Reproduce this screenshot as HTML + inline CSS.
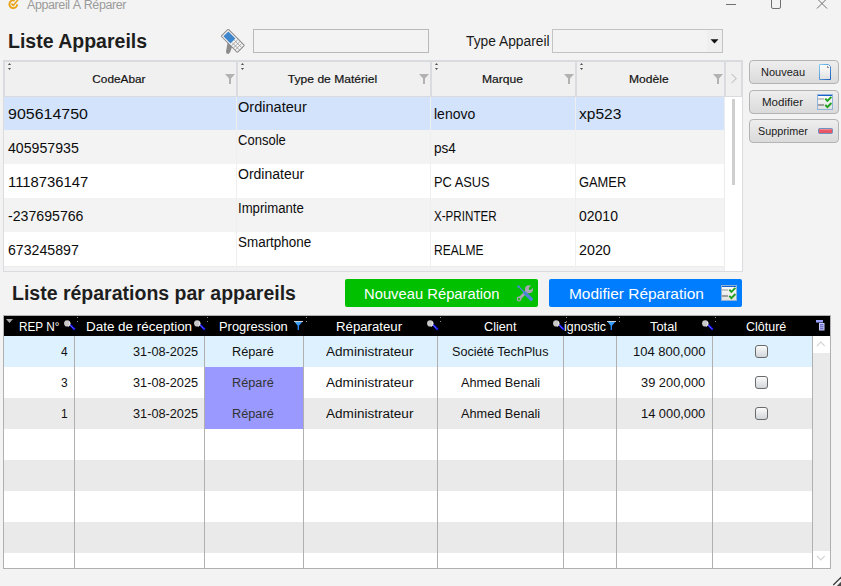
<!DOCTYPE html>
<html><head><meta charset="utf-8">
<style>
*{margin:0;padding:0;box-sizing:border-box}
html,body{width:841px;height:586px;overflow:hidden;background:#f3f3f3;font-family:"Liberation Sans",sans-serif;position:relative}
.a{position:absolute}
.t{position:absolute;white-space:nowrap;line-height:20px;height:20px}
/* upper grid */
#g1{left:3px;top:60px;width:739px;height:211px;border:2px solid #d9dadd;background:#f0f0f0}
.hsep{position:absolute;top:0;width:2px;height:34px;background:#d9dadd}
.row{position:absolute;left:0;height:34px;width:719px}
.csep{position:absolute;top:0;width:1px;height:34px;background:#f0f0f0}
.hd{position:absolute;top:12px;font:bold 11px "Liberation Sans",sans-serif;color:#1a1a1a;text-align:center;line-height:14px}
.srt{position:absolute;top:1px;width:4px;height:9px}
.flt{position:absolute;top:13px}
.d1{position:absolute;font-size:15px;color:#111;line-height:20px;letter-spacing:0.5px}
.d2{position:absolute;font-size:13.5px;color:#111;line-height:18px}
.btn{position:absolute;left:749px;width:90px;height:24px;border:1px solid #b3b3b3;border-radius:4px;background:linear-gradient(#eeeeee,#dadada)}
.btn .t{font-size:11.5px;color:#1a1a1a;line-height:21px;height:21px}
/* lower grid */
#g2{left:3px;top:315px;width:828px;height:254px;border:1px solid #a8a8a8;background:#fff}
.lh{position:absolute;top:0;height:20px;line-height:20px;color:#fff;font-size:12.5px;text-align:center}
.lr{position:absolute;left:0;width:808px;height:31px}
.vs{position:absolute;top:20px;width:1px;height:232px;background:#a8a8a8}
.lc{position:absolute;height:31px;line-height:31px;font-size:12.5px;color:#222;white-space:nowrap}
.cb{position:absolute;width:13px;height:13px;border:1px solid #6a6a6a;border-radius:3px;background:linear-gradient(#fbfbfb,#d2d6da)}
</style></head><body>

<!-- title bar -->
<svg class="a" style="left:8px;top:-2px" width="12" height="12" viewBox="0 0 12 12">
  <path d="M6.8 2.6 A3.9 3.9 0 1 0 9.2 6.2" fill="none" stroke="#e8a317" stroke-width="1.9"/>
  <path d="M3.4 5.6 L5.3 7.4 L10.2 1.6" fill="none" stroke="#e8a317" stroke-width="1.6"/>
</svg>
<div class="t" style="left:27px;top:-5.5px;font-size:12.5px;letter-spacing:-0.4px;color:#9a9a9a">Appareil À Réparer</div>
<div class="a" style="left:726px;top:4px;width:10px;height:1px;background:#707070"></div>
<div class="a" style="left:771px;top:-3px;width:10px;height:12px;border:1px solid #707070;border-radius:2px"></div>
<svg class="a" style="left:816px;top:-2px" width="12" height="12" viewBox="0 0 12 12"><path d="M1 0.5 L11 10.5 M11 0.5 L1 10.5" stroke="#707070" stroke-width="1"/></svg>

<!-- heading -->
<div class="t" style="left:8px;top:31px;font-size:19.5px;font-weight:bold;color:#1e1e1e">Liste Appareils</div>

<!-- scanner icon -->
<svg class="a" style="left:218px;top:27px" width="30" height="30" viewBox="0 0 30 30">
  <path d="M9.5 16 L15 17.5 L12 25.5 L10.5 27 L8.5 26.5 L8 24.5 Z" fill="#8c8c8c"/>
  <g transform="rotate(-45 14.8 13.8)">
    <rect x="9.8" y="2.3" width="10" height="23" rx="0.8" fill="#f4f4f4" stroke="#8a8a8a" stroke-width="1"/>
    <rect x="11.3" y="4" width="7" height="10" fill="#3f86cc"/>
    <path d="M10.3 16.5 H19.3 M10.3 19.3 H19.3 M10.3 22 H19.3 M13 14.5 V25 M16.3 14.5 V25" stroke="#9a9a9a" stroke-width="0.8"/>
  </g>
</svg>
<div class="a" style="left:253px;top:29px;width:176px;height:24px;border:1px solid #b9b9b9;background:#f3f3f3"></div>

<div class="t" style="left:466px;top:32px;font-size:13.8px;color:#1a1a1a">Type Appareil</div>
<div class="a" style="left:552px;top:29px;width:171px;height:24px;border:1px solid #c3c3c3;background:#f3f3f3"></div>
<div class="a" style="left:707px;top:30px;width:15px;height:22px;background:#efefef"></div>
<svg class="a" style="left:710px;top:38.5px" width="9" height="5" viewBox="0 0 9 5"><path d="M0.5 0.3 H8.5 L4.5 4.6 Z" fill="#111"/></svg>

<!-- upper grid -->
<div class="a" style="left:3px;top:60px;width:740px;height:212px;border:1px solid #dadbde;background:#f2f2f2"></div>
<div class="a" style="left:3px;top:60px;width:740px;height:37px;border:2px solid #dadbde;border-bottom-width:1px;background:#f0f0f0"></div>
<div class="a" style="left:236px;top:62px;width:2px;height:34px;background:#dadbde"></div>
<div class="a" style="left:430px;top:62px;width:2px;height:34px;background:#dadbde"></div>
<div class="a" style="left:575px;top:62px;width:2px;height:34px;background:#dadbde"></div>
<div class="a" style="left:724px;top:62px;width:2px;height:34px;background:#dadbde"></div>
<div class="a" style="left:5px;top:73px;width:228px;text-align:center;font:11.5px 'Liberation Sans',sans-serif;-webkit-text-stroke:0.2px #141414;line-height:13px;color:#141414"><span style="display:inline-block;transform:scaleX(1.025)">CodeAbar</span></div>
<div class="a" style="left:238px;top:73px;width:189px;text-align:center;font:11.5px 'Liberation Sans',sans-serif;-webkit-text-stroke:0.2px #141414;line-height:13px;color:#141414"><span style="display:inline-block;transform:scaleX(1.05)">Type de Matériel</span></div>
<div class="a" style="left:432px;top:73px;width:140px;text-align:center;font:11.5px 'Liberation Sans',sans-serif;-webkit-text-stroke:0.2px #141414;line-height:13px;color:#141414"><span style="display:inline-block;transform:scaleX(1.05)">Marque</span></div>
<div class="a" style="left:577px;top:73px;width:144px;text-align:center;font:11.5px 'Liberation Sans',sans-serif;-webkit-text-stroke:0.2px #141414;line-height:13px;color:#141414"><span style="display:inline-block;transform:scaleX(1.05)">Modèle</span></div>
<svg class="a" style="left:8px;top:63px" width="3" height="7" viewBox="0 0 3 7"><path d="M0 2 L1.5 0 L3 2Z M0 5 H3 L1.5 7Z" fill="#505050"/></svg>
<svg class="a" style="left:241px;top:63px" width="3" height="7" viewBox="0 0 3 7"><path d="M0 2 L1.5 0 L3 2Z M0 5 H3 L1.5 7Z" fill="#505050"/></svg>
<svg class="a" style="left:435px;top:63px" width="3" height="7" viewBox="0 0 3 7"><path d="M0 2 L1.5 0 L3 2Z M0 5 H3 L1.5 7Z" fill="#505050"/></svg>
<svg class="a" style="left:580px;top:63px" width="3" height="7" viewBox="0 0 3 7"><path d="M0 2 L1.5 0 L3 2Z M0 5 H3 L1.5 7Z" fill="#505050"/></svg>
<svg class="a" style="left:225px;top:74px" width="10" height="10" viewBox="0 0 10 10"><path d="M0 0 H10 L6 4.5 V10 H4 V4.5 Z" fill="#b2b2b2"/></svg>
<svg class="a" style="left:419px;top:74px" width="10" height="10" viewBox="0 0 10 10"><path d="M0 0 H10 L6 4.5 V10 H4 V4.5 Z" fill="#b2b2b2"/></svg>
<svg class="a" style="left:564px;top:74px" width="10" height="10" viewBox="0 0 10 10"><path d="M0 0 H10 L6 4.5 V10 H4 V4.5 Z" fill="#b2b2b2"/></svg>
<svg class="a" style="left:713px;top:74px" width="10" height="10" viewBox="0 0 10 10"><path d="M0 0 H10 L6 4.5 V10 H4 V4.5 Z" fill="#b2b2b2"/></svg>
<svg class="a" style="left:730px;top:73px" width="8" height="11" viewBox="0 0 8 11"><path d="M1.5 0.8 L6.2 5.5 L1.5 10.2" fill="none" stroke="#c8c8c8" stroke-width="1.1"/></svg>
<div class="a" style="left:4px;top:97px;width:720px;height:33px;background:#d3e3fc"></div>
<div class="a" style="left:4px;top:130px;width:720px;height:34px;background:#f3f3f3"></div>
<div class="a" style="left:4px;top:164px;width:720px;height:34px;background:#fff"></div>
<div class="a" style="left:4px;top:198px;width:720px;height:34px;background:#f3f3f3"></div>
<div class="a" style="left:4px;top:232px;width:720px;height:34px;background:#fff"></div>
<div class="a" style="left:4px;top:266px;width:720px;height:1px;background:#ececec"></div>
<div class="a" style="left:236px;top:97px;width:1px;height:174px;background:#efefef"></div>
<div class="a" style="left:430px;top:97px;width:1px;height:174px;background:#efefef"></div>
<div class="a" style="left:575px;top:97px;width:1px;height:174px;background:#efefef"></div>
<div class="a" style="left:724px;top:97px;width:1px;height:174px;background:#ececec"></div>
<div class="a" style="left:725px;top:97px;width:17px;height:174px;background:#fff"></div>
<div class="a" style="left:732px;top:99px;width:3px;height:86px;background:#cfcfcf"></div>
<div class="a" style="left:7.5px;top:106px;font-size:14px;line-height:16px;color:#0c0c0c;white-space:nowrap;transform:scaleX(1.14);transform-origin:0 0">905614750</div>
<div class="a" style="left:238px;top:99px;font-size:14px;line-height:16px;color:#0c0c0c;white-space:nowrap;transform:scaleX(1.04);transform-origin:0 0">Ordinateur</div>
<div class="a" style="left:434px;top:106px;font-size:14px;line-height:16px;color:#0c0c0c;white-space:nowrap">lenovo</div>
<div class="a" style="left:579px;top:106px;font-size:14px;line-height:16px;color:#0c0c0c;white-space:nowrap;transform:scaleX(1.11);transform-origin:0 0">xp523</div>
<div class="a" style="left:7.5px;top:140px;font-size:14px;line-height:16px;color:#0c0c0c;white-space:nowrap;transform:scaleX(1.01);transform-origin:0 0">405957935</div>
<div class="a" style="left:238px;top:132px;font-size:14px;line-height:16px;color:#0c0c0c;white-space:nowrap;transform:scaleX(0.93);transform-origin:0 0">Console</div>
<div class="a" style="left:434px;top:140px;font-size:14px;line-height:16px;color:#0c0c0c;white-space:nowrap;transform:scaleX(0.97);transform-origin:0 0">ps4</div>
<div class="a" style="left:7.5px;top:174px;font-size:14px;line-height:16px;color:#0c0c0c;white-space:nowrap;transform:scaleX(1.06);transform-origin:0 0">1118736147</div>
<div class="a" style="left:238px;top:166px;font-size:14px;line-height:16px;color:#0c0c0c;white-space:nowrap">Ordinateur</div>
<div class="a" style="left:434px;top:174px;font-size:14px;line-height:16px;color:#0c0c0c;white-space:nowrap;transform:scaleX(0.915);transform-origin:0 0">PC ASUS</div>
<div class="a" style="left:579px;top:174px;font-size:14px;line-height:16px;color:#0c0c0c;white-space:nowrap;transform:scaleX(0.92);transform-origin:0 0">GAMER</div>
<div class="a" style="left:7.5px;top:208px;font-size:14px;line-height:16px;color:#0c0c0c;white-space:nowrap;transform:scaleX(1.01);transform-origin:0 0">-237695766</div>
<div class="a" style="left:238px;top:200px;font-size:14px;line-height:16px;color:#0c0c0c;white-space:nowrap;transform:scaleX(0.94);transform-origin:0 0">Imprimante</div>
<div class="a" style="left:434px;top:208px;font-size:14px;line-height:16px;color:#0c0c0c;white-space:nowrap;transform:scaleX(0.83);transform-origin:0 0">X-PRINTER</div>
<div class="a" style="left:579px;top:208px;font-size:14px;line-height:16px;color:#0c0c0c;white-space:nowrap">02010</div>
<div class="a" style="left:7.5px;top:242px;font-size:14px;line-height:16px;color:#0c0c0c;white-space:nowrap;transform:scaleX(1.01);transform-origin:0 0">673245897</div>
<div class="a" style="left:238px;top:234px;font-size:14px;line-height:16px;color:#0c0c0c;white-space:nowrap;transform:scaleX(0.96);transform-origin:0 0">Smartphone</div>
<div class="a" style="left:434px;top:242px;font-size:14px;line-height:16px;color:#0c0c0c;white-space:nowrap;transform:scaleX(0.86);transform-origin:0 0">REALME</div>
<div class="a" style="left:579px;top:242px;font-size:14px;line-height:16px;color:#0c0c0c;white-space:nowrap;transform:scaleX(1.02);transform-origin:0 0">2020</div>

<!-- right buttons -->
<svg width="0" height="0" style="position:absolute"><defs><linearGradient id="cg" x1="0" y1="0" x2="0" y2="1"><stop offset="0" stop-color="#ffffff"/><stop offset="1" stop-color="#e0e0e0"/></linearGradient><linearGradient id="dg" x1="0" y1="0" x2="1" y2="1"><stop offset="0" stop-color="#ffffff"/><stop offset="1" stop-color="#e8eef4"/></linearGradient></defs></svg>
<div class="btn" style="top:60px"></div>
<div class="btn" style="top:90px"></div>
<div class="btn" style="top:119px"></div>
<div class="a" style="left:761px;top:66.4px;font-size:11px;line-height:13px;color:#1a1a1a">Nouveau</div>
<div class="a" style="left:762px;top:96.4px;font-size:11px;line-height:13px;color:#1a1a1a;transform:scaleX(1.05);transform-origin:0 0">Modifier</div>
<div class="a" style="left:757.5px;top:125.4px;font-size:11px;line-height:13px;color:#1a1a1a;transform:scaleX(0.98);transform-origin:0 0">Supprimer</div>
<svg class="a" style="left:819px;top:64px" width="12" height="16" viewBox="0 0 12 16"><defs><linearGradient id="db" x1="0" y1="0" x2="1" y2="1"><stop offset="0" stop-color="#86cdf2"/><stop offset="1" stop-color="#1d5fc0"/></linearGradient></defs><path d="M0.5 0.5 H9.5 L11.5 2.5 V15.5 H0.5 Z" fill="url(#cg)" stroke="url(#db)" stroke-width="1"/><path d="M8 1.5 L10.5 4 H8 Z" fill="#8a8a8a"/></svg>
<svg class="a" style="left:817px;top:94px" width="16" height="16" viewBox="0 0 16 16"><rect x="0.5" y="0.5" width="15" height="15" fill="url(#cg)" stroke="#8fb4d8"/><path d="M1 1.5 H15" stroke="#1a5fd0" stroke-width="1"/><path d="M1 5 H7" stroke="#b9b9b9" stroke-width="1.6"/><path d="M1 11 H7" stroke="#8c8c8c" stroke-width="1.6"/><path d="M8.3 4.6 L10.4 6.9 L14.4 2.8 M8.3 10.8 L10.4 13.1 L14.4 9" fill="none" stroke="#20a020" stroke-width="1.9"/></svg>
<svg class="a" style="left:818px;top:128px" width="15" height="6" viewBox="0 0 15 6"><rect x="0.5" y="0.5" width="14" height="5" rx="1" fill="#e85565" stroke="#6f93c0" stroke-width="1"/><path d="M1.5 1.6 H13.5" stroke="#f59aa5" stroke-width="0.8"/></svg>

<!-- heading 2 -->
<div class="t" style="left:12px;top:283px;font-size:19.5px;font-weight:bold;color:#1e1e1e">Liste réparations par appareils</div>

<!-- action buttons -->
<div class="a" style="left:345px;top:279px;width:193px;height:28px;background:#00c000;border-radius:2px"></div>
<div class="t" style="left:364px;top:284px;font-size:15px;color:#fff;transform:scaleX(0.985);transform-origin:0 0">Nouveau Réparation</div>
<svg class="a" style="left:510px;top:280px" width="30" height="26" viewBox="0 0 30 26">
  <path d="M9 19 L17.5 10.5" stroke="#a9a3b3" stroke-width="3" stroke-linecap="round"/>
  <circle cx="19" cy="9.3" r="4" fill="#a9a3b3"/>
  <path d="M20.2 8.4 L25 3.6" stroke="#00c000" stroke-width="2.8" stroke-linecap="round"/>
  <circle cx="9" cy="19" r="2.4" fill="#a9a3b3"/>
  <circle cx="9" cy="19.1" r="1.1" fill="#00c000"/>
  <path d="M8.3 6.3 L14.5 12.5" stroke="#4b86d6" stroke-width="1.3" stroke-linecap="round"/>
  <circle cx="8.6" cy="6.6" r="1.2" fill="#4b86d6"/>
  <path d="M15 13 L21.3 19.3" stroke="#4b86d6" stroke-width="3.4" stroke-linecap="round"/>
</svg>
<div class="a" style="left:549px;top:279px;width:193px;height:28px;background:#007cff;border-radius:2px"></div>
<div class="t" style="left:569px;top:284px;font-size:15px;color:#fff;transform:scaleX(1.03);transform-origin:0 0">Modifier Réparation</div>
<svg class="a" style="left:721px;top:285px" width="16" height="16" viewBox="0 0 16 16"><rect x="0.5" y="0.5" width="15" height="15" fill="url(#cg)" stroke="#8fb4d8"/><path d="M1 1.5 H15" stroke="#1a5fd0" stroke-width="1"/><path d="M1 5 H7" stroke="#b9b9b9" stroke-width="1.6"/><path d="M1 11 H7" stroke="#8c8c8c" stroke-width="1.6"/><path d="M8.3 4.6 L10.4 6.9 L14.4 2.8 M8.3 10.8 L10.4 13.1 L14.4 9" fill="none" stroke="#20a020" stroke-width="1.9"/></svg>

<!-- lower grid -->
<div class="a" style="left:3px;top:315px;width:828px;height:254px;border:1px solid #b0b0b0;background:#fff"></div>
<div class="a" style="left:4px;top:316px;width:826px;height:20px;background:#000"></div>
<div class="a" style="left:4px;top:336px;width:808px;height:31px;background:#ddf2fe"></div>
<div class="a" style="left:4px;top:367px;width:808px;height:31px;background:#fff"></div>
<div class="a" style="left:4px;top:398px;width:808px;height:31px;background:#eaeaea"></div>
<div class="a" style="left:4px;top:429px;width:808px;height:31px;background:#fff"></div>
<div class="a" style="left:4px;top:460px;width:808px;height:31px;background:#eaeaea"></div>
<div class="a" style="left:4px;top:491px;width:808px;height:31px;background:#fff"></div>
<div class="a" style="left:4px;top:522px;width:808px;height:31px;background:#eaeaea"></div>
<div class="a" style="left:4px;top:553px;width:808px;height:15px;background:#fff"></div>
<div class="a" style="left:204px;top:367px;width:99px;height:62px;background:#9999ff"></div>
<div class="a" style="left:74px;top:336px;width:1px;height:232px;background:#b0b0b0"></div>
<div class="a" style="left:204px;top:336px;width:1px;height:232px;background:#b0b0b0"></div>
<div class="a" style="left:303px;top:336px;width:1px;height:232px;background:#b0b0b0"></div>
<div class="a" style="left:437px;top:336px;width:1px;height:232px;background:#b0b0b0"></div>
<div class="a" style="left:563px;top:336px;width:1px;height:232px;background:#b0b0b0"></div>
<div class="a" style="left:616px;top:336px;width:1px;height:232px;background:#b0b0b0"></div>
<div class="a" style="left:712px;top:336px;width:1px;height:232px;background:#b0b0b0"></div>
<div class="a" style="left:812px;top:336px;width:1px;height:232px;background:#b0b0b0"></div>
<div class="a" style="left:813px;top:336px;width:17px;height:232px;background:#eaeaea"></div>
<div class="a" style="left:813px;top:336px;width:17px;height:17px;background:#fff"></div>
<div class="a" style="left:813px;top:551px;width:17px;height:17px;background:#fff"></div>
<svg class="a" style="left:816px;top:341px" width="10" height="6" viewBox="0 0 10 6"><path d="M0.8 5.2 L4.8 1.2 L8.8 5.2" fill="none" stroke="#d4d4d4" stroke-width="1.2"/></svg>
<svg class="a" style="left:816px;top:555px" width="10" height="6" viewBox="0 0 10 6"><path d="M0.8 0.8 L4.8 4.8 L8.8 0.8" fill="none" stroke="#d4d4d4" stroke-width="1.2"/></svg>
<svg class="a" style="left:6px;top:319px" width="7" height="4" viewBox="0 0 7 4"><path d="M0 0 H7 L3.5 4Z" fill="#a8a8a8"/></svg>
<div class="a" style="left:18.5px;top:317px;height:20px;line-height:20px;font-size:12.5px;color:#fff;white-space:nowrap;transform:scaleX(0.94);transform-origin:0 0">REP N°</div>
<div class="a" style="left:86px;top:317px;height:20px;line-height:20px;font-size:12.5px;color:#fff;white-space:nowrap;transform:scaleX(1.075);transform-origin:0 0">Date de réception</div>
<div class="a" style="left:218.5px;top:317px;height:20px;line-height:20px;font-size:12.5px;color:#fff;white-space:nowrap;transform:scaleX(1.03);transform-origin:0 0">Progression</div>
<div class="a" style="left:336px;top:317px;height:20px;line-height:20px;font-size:12.5px;color:#fff;white-space:nowrap;transform:scaleX(1.057);transform-origin:0 0">Réparateur</div>
<div class="a" style="left:483.5px;top:317px;height:20px;line-height:20px;font-size:12.5px;color:#fff;white-space:nowrap;transform:scaleX(1.015);transform-origin:0 0">Client</div>
<div class="a" style="left:564px;top:317px;height:20px;line-height:20px;font-size:12.5px;color:#fff;white-space:nowrap;transform:scaleX(0.99);transform-origin:0 0">ignostic</div>
<div class="a" style="left:649.5px;top:317px;height:20px;line-height:20px;font-size:12.5px;color:#fff;white-space:nowrap;transform:scaleX(1.027);transform-origin:0 0">Total</div>
<div class="a" style="left:746px;top:317px;height:20px;line-height:20px;font-size:12.5px;color:#fff;white-space:nowrap">Clôturé</div>
<svg class="a" style="left:64px;top:320px" width="12" height="11" viewBox="0 0 12 11"><path d="M6 4.8 L10.8 9.6" stroke="#1010f0" stroke-width="2.2"/><path d="M6 5 L10.8 9.8" stroke="#fff" stroke-width="0.6" stroke-dasharray="0.8 0.9"/><circle cx="3.2" cy="3.4" r="3.1" fill="#c8c8c8"/><path d="M5.4 1.8 A3 3 0 0 1 4.2 6.2" fill="none" stroke="#f4f4f4" stroke-width="1"/></svg>
<svg class="a" style="left:193.5px;top:320px" width="12" height="11" viewBox="0 0 12 11"><path d="M6 4.8 L10.8 9.6" stroke="#1010f0" stroke-width="2.2"/><path d="M6 5 L10.8 9.8" stroke="#fff" stroke-width="0.6" stroke-dasharray="0.8 0.9"/><circle cx="3.2" cy="3.4" r="3.1" fill="#c8c8c8"/><path d="M5.4 1.8 A3 3 0 0 1 4.2 6.2" fill="none" stroke="#f4f4f4" stroke-width="1"/></svg>
<svg class="a" style="left:427px;top:320px" width="12" height="11" viewBox="0 0 12 11"><path d="M6 4.8 L10.8 9.6" stroke="#1010f0" stroke-width="2.2"/><path d="M6 5 L10.8 9.8" stroke="#fff" stroke-width="0.6" stroke-dasharray="0.8 0.9"/><circle cx="3.2" cy="3.4" r="3.1" fill="#c8c8c8"/><path d="M5.4 1.8 A3 3 0 0 1 4.2 6.2" fill="none" stroke="#f4f4f4" stroke-width="1"/></svg>
<svg class="a" style="left:553px;top:320px" width="12" height="11" viewBox="0 0 12 11"><path d="M6 4.8 L10.8 9.6" stroke="#1010f0" stroke-width="2.2"/><path d="M6 5 L10.8 9.8" stroke="#fff" stroke-width="0.6" stroke-dasharray="0.8 0.9"/><circle cx="3.2" cy="3.4" r="3.1" fill="#c8c8c8"/><path d="M5.4 1.8 A3 3 0 0 1 4.2 6.2" fill="none" stroke="#f4f4f4" stroke-width="1"/></svg>
<svg class="a" style="left:702px;top:320px" width="12" height="11" viewBox="0 0 12 11"><path d="M6 4.8 L10.8 9.6" stroke="#1010f0" stroke-width="2.2"/><path d="M6 5 L10.8 9.8" stroke="#fff" stroke-width="0.6" stroke-dasharray="0.8 0.9"/><circle cx="3.2" cy="3.4" r="3.1" fill="#c8c8c8"/><path d="M5.4 1.8 A3 3 0 0 1 4.2 6.2" fill="none" stroke="#f4f4f4" stroke-width="1"/></svg>
<svg class="a" style="left:294px;top:321px" width="9" height="9" viewBox="0 0 9 9"><defs><linearGradient id="fb" x1="0" y1="0" x2="1" y2="1"><stop offset="0" stop-color="#4ec0ff"/><stop offset="1" stop-color="#1060f0"/></linearGradient></defs><path d="M0 0 H9 L5 4.8 V9 H3.6 V4.8 Z" fill="url(#fb)"/><path d="M0 0.5 H9" stroke="#c8d0d8" stroke-width="1"/></svg>
<svg class="a" style="left:607px;top:321px" width="9" height="9" viewBox="0 0 9 9"><path d="M0 0 H9 L5 4.8 V9 H3.6 V4.8 Z" fill="url(#fb)"/><path d="M0 0.5 H9" stroke="#c8d0d8" stroke-width="1"/></svg>
<svg class="a" style="left:816px;top:320px" width="9" height="11" viewBox="0 0 9 11"><rect x="0" y="0" width="7" height="2.5" fill="#9aa0ff"/><rect x="3" y="3" width="5.5" height="7.5" fill="#c8ccff"/><path d="M4 4.8 H7.5 M4 6.8 H7.5 M4 8.8 H7.5" stroke="#4848a8" stroke-width="1"/></svg>
<div class="a" style="left:77px;top:317px;width:1px;height:1px;background:#8a8a8a"></div><div class="a" style="left:77px;top:321px;width:1px;height:1px;background:#8a8a8a"></div>
<div class="a" style="left:207px;top:317px;width:1px;height:1px;background:#8a8a8a"></div><div class="a" style="left:207px;top:321px;width:1px;height:1px;background:#8a8a8a"></div>
<div class="a" style="left:306px;top:317px;width:1px;height:1px;background:#8a8a8a"></div><div class="a" style="left:306px;top:321px;width:1px;height:1px;background:#8a8a8a"></div>
<div class="a" style="left:440px;top:317px;width:1px;height:1px;background:#8a8a8a"></div><div class="a" style="left:440px;top:321px;width:1px;height:1px;background:#8a8a8a"></div>
<div class="a" style="left:566px;top:317px;width:1px;height:1px;background:#8a8a8a"></div><div class="a" style="left:566px;top:321px;width:1px;height:1px;background:#8a8a8a"></div>
<div class="a" style="left:619px;top:317px;width:1px;height:1px;background:#8a8a8a"></div><div class="a" style="left:619px;top:321px;width:1px;height:1px;background:#8a8a8a"></div>
<div class="a" style="left:715px;top:317px;width:1px;height:1px;background:#8a8a8a"></div><div class="a" style="left:715px;top:321px;width:1px;height:1px;background:#8a8a8a"></div>
<div class="a" style="left:61px;top:337px;height:31px;line-height:31px;font-size:12px;color:#111;white-space:nowrap">4</div>
<div class="a" style="left:132.5px;top:337px;height:31px;line-height:31px;font-size:12px;color:#111;white-space:nowrap;transform:scaleX(1.06);transform-origin:0 0">31-08-2025</div>
<div class="a" style="left:232.2px;top:337px;height:31px;line-height:31px;font-size:12px;color:#111;white-space:nowrap;transform:scaleX(1.06);transform-origin:0 0">Réparé</div>
<div class="a" style="left:326px;top:337px;height:31px;line-height:31px;font-size:12px;color:#111;white-space:nowrap;transform:scaleX(1.13);transform-origin:0 0">Administrateur</div>
<div class="a" style="left:451.7px;top:337px;height:31px;line-height:31px;font-size:12px;color:#111;white-space:nowrap;transform:scaleX(1.05);transform-origin:0 0">Société TechPlus</div>
<div class="a" style="left:633px;top:337px;height:31px;line-height:31px;font-size:12px;color:#111;white-space:nowrap;transform:scaleX(1.085);transform-origin:0 0">104 800,000</div>
<div class="cb" style="left:755px;top:345px"></div>
<div class="a" style="left:61px;top:368px;height:31px;line-height:31px;font-size:12px;color:#111;white-space:nowrap">3</div>
<div class="a" style="left:132.5px;top:368px;height:31px;line-height:31px;font-size:12px;color:#111;white-space:nowrap;transform:scaleX(1.06);transform-origin:0 0">31-08-2025</div>
<div class="a" style="left:232.2px;top:368px;height:31px;line-height:31px;font-size:12px;color:#333;white-space:nowrap;transform:scaleX(1.06);transform-origin:0 0">Réparé</div>
<div class="a" style="left:326px;top:368px;height:31px;line-height:31px;font-size:12px;color:#111;white-space:nowrap;transform:scaleX(1.13);transform-origin:0 0">Administrateur</div>
<div class="a" style="left:460.6px;top:368px;height:31px;line-height:31px;font-size:12px;color:#111;white-space:nowrap;transform:scaleX(1.06);transform-origin:0 0">Ahmed Benali</div>
<div class="a" style="left:641.4px;top:368px;height:31px;line-height:31px;font-size:12px;color:#111;white-space:nowrap;transform:scaleX(1.07);transform-origin:0 0">39 200,000</div>
<div class="cb" style="left:755px;top:376px"></div>
<div class="a" style="left:61px;top:399px;height:31px;line-height:31px;font-size:12px;color:#111;white-space:nowrap">1</div>
<div class="a" style="left:132.5px;top:399px;height:31px;line-height:31px;font-size:12px;color:#111;white-space:nowrap;transform:scaleX(1.06);transform-origin:0 0">31-08-2025</div>
<div class="a" style="left:232.2px;top:399px;height:31px;line-height:31px;font-size:12px;color:#333;white-space:nowrap;transform:scaleX(1.06);transform-origin:0 0">Réparé</div>
<div class="a" style="left:326px;top:399px;height:31px;line-height:31px;font-size:12px;color:#111;white-space:nowrap;transform:scaleX(1.13);transform-origin:0 0">Administrateur</div>
<div class="a" style="left:460.6px;top:399px;height:31px;line-height:31px;font-size:12px;color:#111;white-space:nowrap;transform:scaleX(1.06);transform-origin:0 0">Ahmed Benali</div>
<div class="a" style="left:641.4px;top:399px;height:31px;line-height:31px;font-size:12px;color:#111;white-space:nowrap;transform:scaleX(1.07);transform-origin:0 0">14 000,000</div>
<div class="cb" style="left:755px;top:407px"></div>

<!-- resize grip -->
<svg class="a" style="left:831px;top:574px" width="10" height="12" viewBox="0 0 10 12"><path d="M2.3 11 L10.5 2.8" stroke="#3c3c3c" stroke-width="1.3"/><path d="M5.8 12 L10 7.8 V12 Z" fill="#4a4a4a"/></svg>
</body></html>
